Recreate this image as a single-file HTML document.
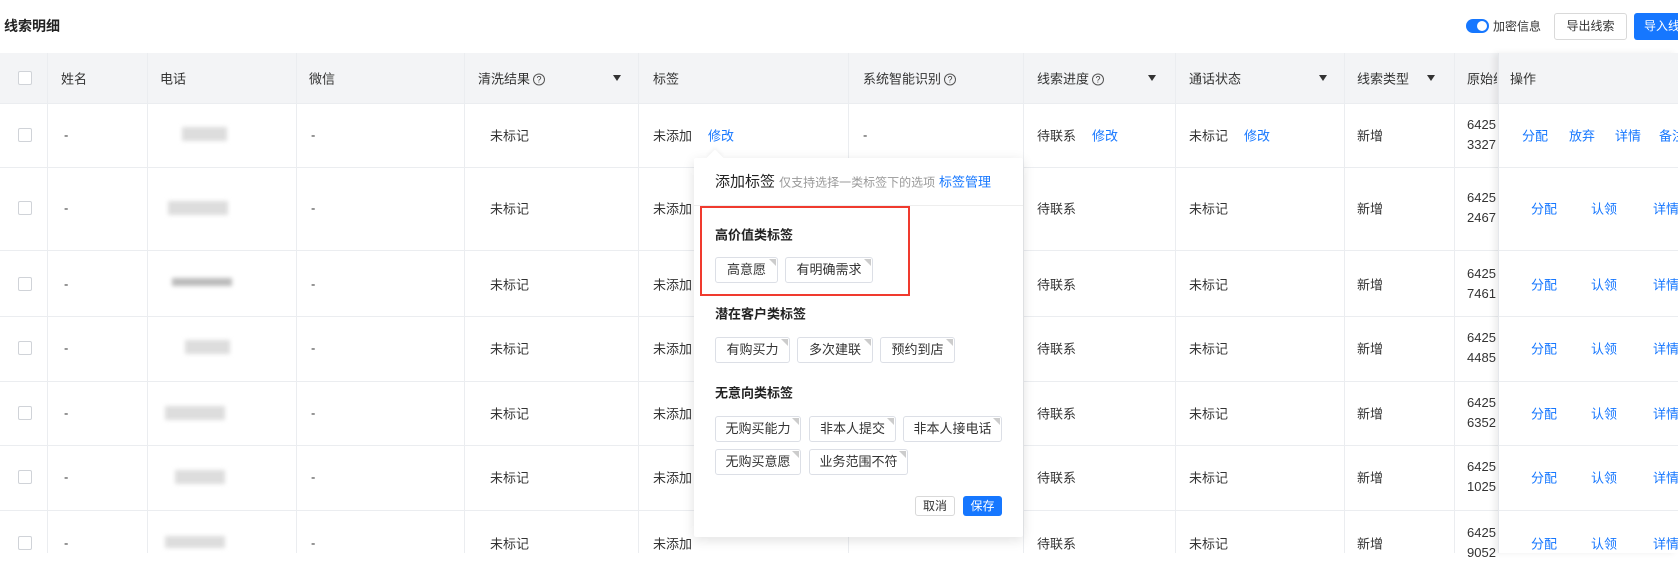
<!DOCTYPE html>
<html><head><meta charset="utf-8"><style>
*{margin:0;padding:0;box-sizing:border-box}
body{width:1678px;height:553px;overflow:hidden;background:#fff;font-family:"Liberation Sans","Noto Sans CJK SC",sans-serif;font-size:13px;color:#333;position:relative}
.a{position:absolute;white-space:nowrap}
.c{transform:translateY(-50%)}
.blue{color:#1677ff}
.hd{background:#f3f4f6}
.vl{position:absolute;width:1px;background:#ebedf0}
.hl{position:absolute;height:1px;background:#ebedf0;left:0;width:1678px}
.cb{position:absolute;width:14px;height:14px;border:1px solid #d0d3d8;border-radius:2px;background:#fff;left:18px}
.q{display:inline-block;width:12px;height:12px;border:1px solid #555;border-radius:50%;font-size:9px;line-height:10px;text-align:center;margin-left:3px;vertical-align:1px}
.f{position:absolute;width:0;height:0;border-left:4px solid transparent;border-right:4px solid transparent;border-top:6px solid #333}
.blur{position:absolute;background:#ddd;filter:blur(2px)}
.tag{position:absolute;height:26px;border:1px solid #dcdfe6;border-radius:3px;font-size:13px;line-height:24px;text-align:center;color:#333;background:#fff}
.tag:after{content:"";position:absolute;right:1px;top:1px;border-top:7px solid #ccc;border-left:7px solid transparent}
.sec{position:absolute;font-size:13px;font-weight:bold;color:#222;left:715px}
</style></head><body>
<div class="a c" style="left:4px;top:26px;font-size:14px;font-weight:bold;color:#222">线索明细</div>
<div class="a" style="left:1466px;top:19px;width:23px;height:14px;border-radius:7px;background:#1677ff"><div style="position:absolute;right:2px;top:2px;width:10px;height:10px;border-radius:50%;background:#fff"></div></div>
<div class="a c" style="left:1493px;top:26px;font-size:12px">加密信息</div>
<div class="a" style="left:1554px;top:13px;width:73px;height:27px;border:1px solid #d9d9d9;border-radius:3px;font-size:12px;line-height:25px;text-align:center">导出线索</div>
<div class="a" style="left:1634px;top:13px;width:60px;height:27px;background:#1677ff;border-radius:3px;color:#fff;font-size:12px;line-height:27px;padding-left:10px">导入线索</div>

<div class="hd a" style="left:0;top:53px;width:1678px;height:50px"></div>
<div class="hl" style="top:103px"></div><div class="hl" style="top:167px"></div><div class="hl" style="top:250px"></div><div class="hl" style="top:316px"></div><div class="hl" style="top:381px"></div><div class="hl" style="top:445px"></div><div class="hl" style="top:510px"></div>
<div class="vl" style="left:47px;top:53px;height:500px"></div><div class="vl" style="left:147px;top:53px;height:500px"></div><div class="vl" style="left:296px;top:53px;height:500px"></div><div class="vl" style="left:464px;top:53px;height:500px"></div><div class="vl" style="left:638px;top:53px;height:500px"></div><div class="vl" style="left:848px;top:53px;height:500px"></div><div class="vl" style="left:1023px;top:53px;height:500px"></div><div class="vl" style="left:1175px;top:53px;height:500px"></div><div class="vl" style="left:1344px;top:53px;height:500px"></div><div class="vl" style="left:1454px;top:53px;height:500px"></div>
<div class="a" style="left:1498px;top:53px;width:180px;height:500px;box-shadow:-4px 0 6px rgba(0,0,0,0.07);border-left:1px solid #e5e7eb"></div>
<div class="hd a" style="left:1499px;top:53px;width:179px;height:50px"></div>

<div class="cb" style="top:71px"></div>
<div class="a c" style="left:61px;top:78px">姓名</div>
<div class="a c" style="left:160px;top:78px">电话</div>
<div class="a c" style="left:309px;top:78px">微信</div>
<div class="a c" style="left:478px;top:78px">清洗结果<span class="q">?</span></div><div class="f" style="left:613px;top:75px"></div>
<div class="a c" style="left:653px;top:78px">标签</div>
<div class="a c" style="left:863px;top:78px">系统智能识别<span class="q">?</span></div>
<div class="a c" style="left:1037px;top:78px">线索进度<span class="q">?</span></div><div class="f" style="left:1148px;top:75px"></div>
<div class="a c" style="left:1189px;top:78px">通话状态</div><div class="f" style="left:1319px;top:75px"></div>
<div class="a c" style="left:1357px;top:78px">线索类型</div><div class="f" style="left:1427px;top:75px"></div>
<div class="a c" style="left:1467px;top:78px;width:30px;overflow:hidden">原始线</div>
<div class="a c" style="left:1510px;top:78px">操作</div>

<!-- rows -->
<div class="cb" style="top:128px"></div><div class="cb" style="top:201px"></div><div class="cb" style="top:277px"></div><div class="cb" style="top:341px"></div><div class="cb" style="top:406px"></div><div class="cb" style="top:470px"></div><div class="cb" style="top:536px"></div>
<div class="a c" style="left:64px;top:135px">-</div><div class="a c" style="left:64px;top:208px">-</div><div class="a c" style="left:64px;top:284px">-</div><div class="a c" style="left:64px;top:348px">-</div><div class="a c" style="left:64px;top:413px">-</div><div class="a c" style="left:64px;top:477px">-</div><div class="a c" style="left:64px;top:543px">-</div>
<div class="blur" style="left:182px;top:127px;width:45px;height:14px"></div>
<div class="blur" style="left:168px;top:201px;width:60px;height:14px"></div>
<div class="blur" style="left:172px;top:278px;width:60px;height:8px;background:#bbb"></div>
<div class="blur" style="left:185px;top:340px;width:45px;height:14px"></div>
<div class="blur" style="left:165px;top:406px;width:60px;height:14px"></div>
<div class="blur" style="left:175px;top:470px;width:50px;height:14px"></div>
<div class="blur" style="left:165px;top:536px;width:60px;height:12px"></div>
<div class="a c" style="left:311px;top:135px">-</div><div class="a c" style="left:311px;top:208px">-</div><div class="a c" style="left:311px;top:284px">-</div><div class="a c" style="left:311px;top:348px">-</div><div class="a c" style="left:311px;top:413px">-</div><div class="a c" style="left:311px;top:477px">-</div><div class="a c" style="left:311px;top:543px">-</div>
<div class="a c" style="left:490px;top:135px">未标记</div><div class="a c" style="left:490px;top:208px">未标记</div><div class="a c" style="left:490px;top:284px">未标记</div><div class="a c" style="left:490px;top:348px">未标记</div><div class="a c" style="left:490px;top:413px">未标记</div><div class="a c" style="left:490px;top:477px">未标记</div><div class="a c" style="left:490px;top:543px">未标记</div>
<div class="a c" style="left:653px;top:135px">未添加</div><div class="a c blue" style="left:708px;top:135px">修改</div>
<div class="a c" style="left:653px;top:208px">未添加</div><div class="a c" style="left:653px;top:284px">未添加</div><div class="a c" style="left:653px;top:348px">未添加</div><div class="a c" style="left:653px;top:413px">未添加</div><div class="a c" style="left:653px;top:477px">未添加</div><div class="a c" style="left:653px;top:543px">未添加</div>
<div class="a c" style="left:863px;top:135px">-</div>
<div class="a c" style="left:1037px;top:135px">待联系</div><div class="a c blue" style="left:1092px;top:135px">修改</div>
<div class="a c" style="left:1037px;top:208px">待联系</div><div class="a c" style="left:1037px;top:284px">待联系</div><div class="a c" style="left:1037px;top:348px">待联系</div><div class="a c" style="left:1037px;top:413px">待联系</div><div class="a c" style="left:1037px;top:477px">待联系</div><div class="a c" style="left:1037px;top:543px">待联系</div>
<div class="a c" style="left:1189px;top:135px">未标记</div><div class="a c blue" style="left:1244px;top:135px">修改</div>
<div class="a c" style="left:1189px;top:208px">未标记</div><div class="a c" style="left:1189px;top:284px">未标记</div><div class="a c" style="left:1189px;top:348px">未标记</div><div class="a c" style="left:1189px;top:413px">未标记</div><div class="a c" style="left:1189px;top:477px">未标记</div><div class="a c" style="left:1189px;top:543px">未标记</div>
<div class="a c" style="left:1357px;top:135px">新增</div><div class="a c" style="left:1357px;top:208px">新增</div><div class="a c" style="left:1357px;top:284px">新增</div><div class="a c" style="left:1357px;top:348px">新增</div><div class="a c" style="left:1357px;top:413px">新增</div><div class="a c" style="left:1357px;top:477px">新增</div><div class="a c" style="left:1357px;top:543px">新增</div>
<div class="a c" style="left:1467px;top:135px;line-height:20px;width:30px;overflow:hidden">6425<br>3327</div>
<div class="a c" style="left:1467px;top:208px;line-height:20px;width:30px;overflow:hidden">6425<br>2467</div>
<div class="a c" style="left:1467px;top:284px;line-height:20px;width:30px;overflow:hidden">6425<br>7461</div>
<div class="a c" style="left:1467px;top:348px;line-height:20px;width:30px;overflow:hidden">6425<br>4485</div>
<div class="a c" style="left:1467px;top:413px;line-height:20px;width:30px;overflow:hidden">6425<br>6352</div>
<div class="a c" style="left:1467px;top:477px;line-height:20px;width:30px;overflow:hidden">6425<br>1025</div>
<div class="a c" style="left:1467px;top:543px;line-height:20px;width:30px;overflow:hidden">6425<br>9052</div>
<div class="a c blue" style="left:1522px;top:135px">分配</div><div class="a c blue" style="left:1569px;top:135px">放弃</div><div class="a c blue" style="left:1615px;top:135px">详情</div><div class="a c blue" style="left:1659px;top:135px">备注</div>
<div class="a c blue" style="left:1531px;top:208px">分配</div><div class="a c blue" style="left:1591px;top:208px">认领</div><div class="a c blue" style="left:1653px;top:208px">详情</div>
<div class="a c blue" style="left:1531px;top:284px">分配</div><div class="a c blue" style="left:1591px;top:284px">认领</div><div class="a c blue" style="left:1653px;top:284px">详情</div>
<div class="a c blue" style="left:1531px;top:348px">分配</div><div class="a c blue" style="left:1591px;top:348px">认领</div><div class="a c blue" style="left:1653px;top:348px">详情</div>
<div class="a c blue" style="left:1531px;top:413px">分配</div><div class="a c blue" style="left:1591px;top:413px">认领</div><div class="a c blue" style="left:1653px;top:413px">详情</div>
<div class="a c blue" style="left:1531px;top:477px">分配</div><div class="a c blue" style="left:1591px;top:477px">认领</div><div class="a c blue" style="left:1653px;top:477px">详情</div>
<div class="a c blue" style="left:1531px;top:543px">分配</div><div class="a c blue" style="left:1591px;top:543px">认领</div><div class="a c blue" style="left:1653px;top:543px">详情</div>

<!-- popup -->
<div class="a" style="left:694px;top:158px;width:329px;height:379px;background:#fff;box-shadow:0 3px 12px rgba(0,0,0,0.12);border-radius:2px"></div>
<div class="a" style="left:709px;top:152px;width:12px;height:12px;background:#fff;transform:rotate(45deg);box-shadow:-2px -2px 3px rgba(0,0,0,0.04)"></div>
<div class="a c" style="left:715px;top:181px;font-size:15px;color:#222">添加标签 <span style="font-size:12px;color:#999">仅支持选择一类标签下的选项</span></div>
<div class="a c blue" style="left:939px;top:181px;font-size:13px">标签管理</div>
<div class="a" style="left:694px;top:205px;width:329px;height:1px;background:#eee"></div>
<div class="a" style="left:700px;top:206px;width:210px;height:90px;border:2px solid #f03a2e"></div>
<div class="sec c" style="top:234px">高价值类标签</div>
<div class="tag" style="left:715px;top:257px;width:63px">高意愿</div>
<div class="tag" style="left:785px;top:257px;width:88px">有明确需求</div>
<div class="sec c" style="top:313px">潜在客户类标签</div>
<div class="tag" style="left:715px;top:337px;width:75px">有购买力</div>
<div class="tag" style="left:797px;top:337px;width:76px">多次建联</div>
<div class="tag" style="left:880px;top:337px;width:75px">预约到店</div>
<div class="sec c" style="top:392px">无意向类标签</div>
<div class="tag" style="left:715px;top:416px;width:86px">无购买能力</div>
<div class="tag" style="left:809px;top:416px;width:87px">非本人提交</div>
<div class="tag" style="left:903px;top:416px;width:99px">非本人接电话</div>
<div class="tag" style="left:715px;top:449px;width:86px">无购买意愿</div>
<div class="tag" style="left:809px;top:449px;width:99px">业务范围不符</div>
<div class="a" style="left:915px;top:496px;width:40px;height:20px;border:1px solid #d9d9d9;border-radius:3px;font-size:12px;line-height:18px;text-align:center">取消</div>
<div class="a" style="left:963px;top:496px;width:39px;height:20px;background:#1677ff;border-radius:3px;font-size:12px;line-height:20px;text-align:center;color:#fff">保存</div>
</body></html>
